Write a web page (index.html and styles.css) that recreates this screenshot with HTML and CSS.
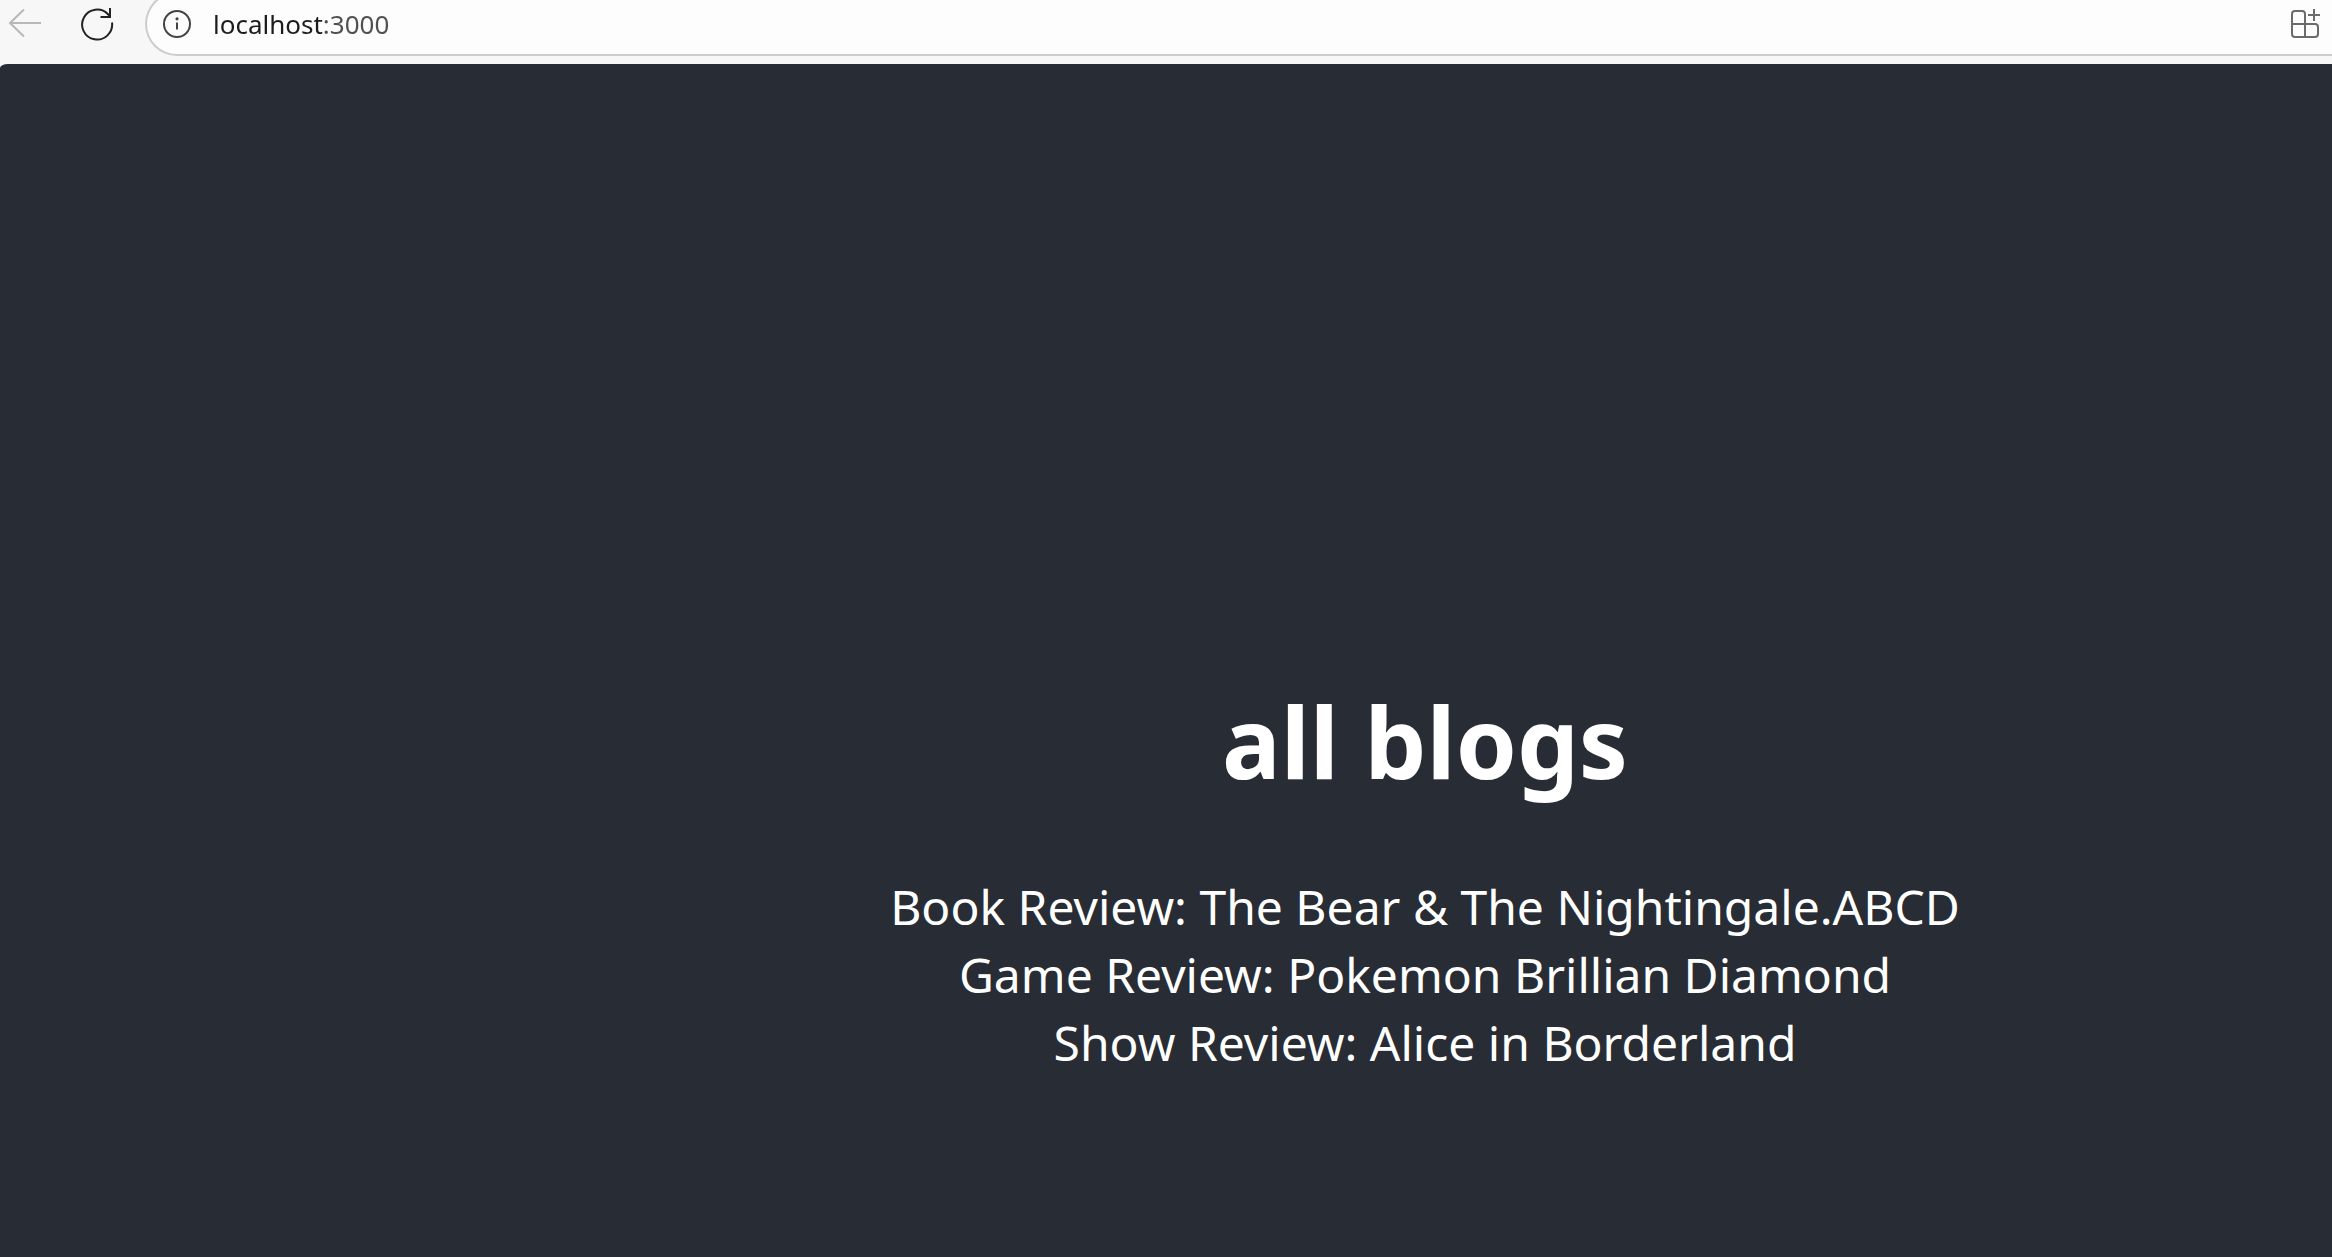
FILE: index.html
```html
<!DOCTYPE html>
<html lang="en">
<head>
<meta charset="utf-8">
<title>localhost:3000</title>
<link rel="stylesheet" href="styles.css">
</head>
<body>
<div class="toolbar">
  <button class="tool back" type="button" aria-label="Back" disabled>
    <svg width="34" height="32" viewBox="0 0 34 32"><path d="M33 15H2M16 1.500L2 15L16 28.500"/></svg>
  </button>
  <button class="tool reload" type="button" aria-label="Reload">
    <svg width="34" height="34" viewBox="0 0 34 34"><path d="M32 15.500A15 15 0 1 1 28 7.200L29.500 9M30 1V10H20.500"/></svg>
  </button>
  <div class="address">
    <button class="tool info" type="button" aria-label="View site information">
      <svg width="30" height="30" viewBox="0 0 30 30"><circle cx="15" cy="15" r="13"/><path d="M15 13.500V20.500"/><circle class="dot" cx="15" cy="9.800" r="1.600"/></svg>
    </button>
    <input class="url" type="text" aria-label="Address" value="localhost:3000">
    <button class="tool apps" type="button" aria-label="Install app">
      <svg width="30" height="30" viewBox="0 0 30 30"><path d="M15 28V5Q15 2 12 2H5Q2 2 2 5V25Q2 28 5 28H25Q28 28 28 25V18Q28 15 25 15H2M24 0V12M18 6H30"/></svg>
    </button>
  </div>
</div>
<main class="page">
  <h1 class="title">all blogs</h1>
  <ul class="blogs">
    <li>Book Review: The Bear &amp; The Nightingale.ABCD</li>
    <li>Game Review: Pokemon Brillian Diamond</li>
    <li>Show Review: Alice in Borderland</li>
  </ul>
</main>
</body>
</html>
```
FILE: styles.css
```css
* { box-sizing: border-box; }

body {
  margin: 0;
  min-height: 100vh;
  display: flex;
  flex-direction: column;
  background: #f7f7f7;
  font-family: "Segoe UI", "Noto Sans", "Open Sans", sans-serif;
}

.toolbar {
  display: flex;
  align-items: center;
  height: 64px;
  padding: 0 0 16px 8px;
  overflow: hidden;
}

.tool {
  display: flex;
  flex: none;
  padding: 0;
  border: 0;
  background: none;
  color: #222;
}

.tool svg {
  fill: none;
  stroke: currentColor;
  stroke-width: 2;
}

.back { color: #b8b8b8; }
.reload { margin: 0 31px 0 38px; }
.info { color: #444; }
.info .dot { fill: currentColor; stroke: none; }
.apps { color: #6b6b6b; }

.address {
  display: flex;
  flex: 1;
  flex-shrink: 0;
  align-items: center;
  height: 64px;
  padding: 0 12px 0 15px;
  border: 2px solid #ccc;
  border-right: 0;
  border-radius: 32px 0 0 32px;
  background: #fdfdfd;
}

/* The host name is darker than the port that follows it. */
.url {
  flex: 1;
  min-width: 0;
  padding: 0 0 0 21px;
  border: 0;
  outline: 0;
  background: linear-gradient(90deg, #1c1c1c 130px, #505050 130px);
  background-clip: text;
  color: transparent;
  font-family: inherit;
  font-size: 26px;
  line-height: 40px;
}

.page {
  flex: 1;
  display: flex;
  flex-direction: column;
  align-items: center;
  justify-content: center;
  padding: 544px 0 116px 518px;
  border-top-left-radius: 8px 4px;
  background: #282c34;
  color: #fff;
}

.title {
  margin: 0 0 64px;
  font-size: 98px;
  line-height: 136px;
}

.blogs {
  margin: 0;
  padding: 0;
  list-style: none;
  text-align: center;
  font-size: 48px;
  line-height: 68px;
}
```
